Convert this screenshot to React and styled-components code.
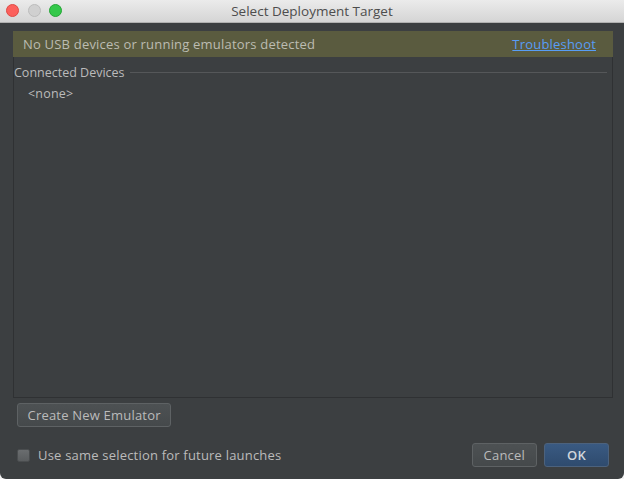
import React from "react";
import styled, { createGlobalStyle } from "styled-components";

const Global = createGlobalStyle`
  html, body { margin: 0; padding: 0; background: #f2f2f2; }
  #root { width: 624px; height: 479px; }
  * { box-sizing: border-box; }
`;

const Window = styled.div`
  width: 624px;
  height: 479px;
  display: flex;
  flex-direction: column;
  background: #3c3f41;
  border-radius: 0 0 6px 6px;
  overflow: hidden;
  font-family: "Open Sans", "DejaVu Sans", sans-serif;
  font-size: 13px;
  letter-spacing: 0.2px;
  color: #bbbbbb;
`;

const TitleBar = styled.div`
  height: 23px;
  flex: none;
  position: relative;
  display: flex;
  align-items: center;
  justify-content: center;
  background: linear-gradient(#ebebeb, #d5d5d5);
  border-bottom: 1px solid #b1b1b1;
  color: #4d4d4d;
  font-size: 13.5px;
  letter-spacing: 0;
`;

const Lights = styled.div`
  position: absolute;
  left: 6px;
  top: 4px;
  display: flex;
  gap: 8.5px;
`;

const Light = styled.span`
  width: 13px;
  height: 13px;
  border-radius: 50%;
  background: ${(p) => p.$c};
  border: 1px solid ${(p) => p.$b};
`;

const Content = styled.div`
  flex: 1;
  display: flex;
  flex-direction: column;
  padding: 8px 11px 0 13px;
`;

const Banner = styled.div`
  height: 26px;
  flex: none;
  display: flex;
  align-items: center;
  justify-content: space-between;
  padding: 0 17px 0 10px;
  background: #5a5b3f;
  color: #bcbcb2;
`;

const Link = styled.a`
  color: #589df6;
  text-decoration: underline;
  cursor: pointer;
`;

const Panel = styled.div`
  flex: 1;
  display: flex;
  flex-direction: column;
  border: 1px solid #2f3133;
  border-top: none;
`;

const GroupHeader = styled.div`
  display: flex;
  align-items: center;
  gap: 5px;
  height: 30px;
  padding: 0 5px 0 0;
  font-size: 12.5px;
  letter-spacing: 0;
`;

const Rule = styled.div`
  flex: 1;
  height: 1px;
  background: #555759;
`;

const Item = styled.div`
  padding-left: 14px;
  height: 14px;
  line-height: 14px;
  font-size: 12.5px;
`;

const ButtonRow = styled.div`
  display: flex;
  padding: 5px 0 0 4px;
  height: 29px;
  flex: none;
`;

const Button = styled.button`
  height: 24px;
  padding: 0 ${(p) => p.$pad || 11}px;
  min-width: ${(p) => p.$w || 0}px;
  border-radius: 3px;
  font-family: inherit;
  font-size: 13px;
  letter-spacing: 0.2px;
  color: #bbbbbb;
  border: 1px solid ${(p) => (p.$primary ? "#4c627d" : "#5e6264")};
  background: ${(p) =>
    p.$primary
      ? "linear-gradient(#3a5a82, #2f4b6e)"
      : "linear-gradient(#4d5153, #45494b)"};
  ${(p) => (p.$primary ? "color: #d0d6dc; font-weight: 600;" : "")}
`;

const Footer = styled.div`
  height: 52px;
  flex: none;
  display: flex;
  align-items: center;
  justify-content: space-between;
  padding: 4px 15px 0 17px;
`;

const CheckLabel = styled.label`
  display: flex;
  align-items: center;
  gap: 8px;
`;

const Box = styled.span`
  width: 13px;
  height: 13px;
  border-radius: 2px;
  background: linear-gradient(#6a6d6f, #5a5d5f);
  border: 1px solid #4a4d4f;
`;

const Actions = styled.div`
  display: flex;
  gap: 7px;
`;

export default function App() {
  return (
    <>
      <Global />
      <Window>
        <TitleBar>
          <Lights>
            <Light $c="#fc605c" $b="#de4a45" />
            <Light $c="#d0d0d0" $b="#bcbcbc" />
            <Light $c="#34c84a" $b="#24a535" />
          </Lights>
          Select Deployment Target
        </TitleBar>
        <Content>
          <Banner>
            <span>No USB devices or running emulators detected</span>
            <Link>Troubleshoot</Link>
          </Banner>
          <Panel>
            <GroupHeader>
              <span>Connected Devices</span>
              <Rule />
            </GroupHeader>
            <Item>&lt;none&gt;</Item>
          </Panel>
          <ButtonRow>
            <Button $pad={9.5}>Create New Emulator</Button>
          </ButtonRow>
        </Content>
        <Footer>
          <CheckLabel>
            <Box />
            <span>Use same selection for future launches</span>
          </CheckLabel>
          <Actions>
            <Button $w={65}>Cancel</Button>
            <Button $primary $w={65}>OK</Button>
          </Actions>
        </Footer>
      </Window>
    </>
  );
}
